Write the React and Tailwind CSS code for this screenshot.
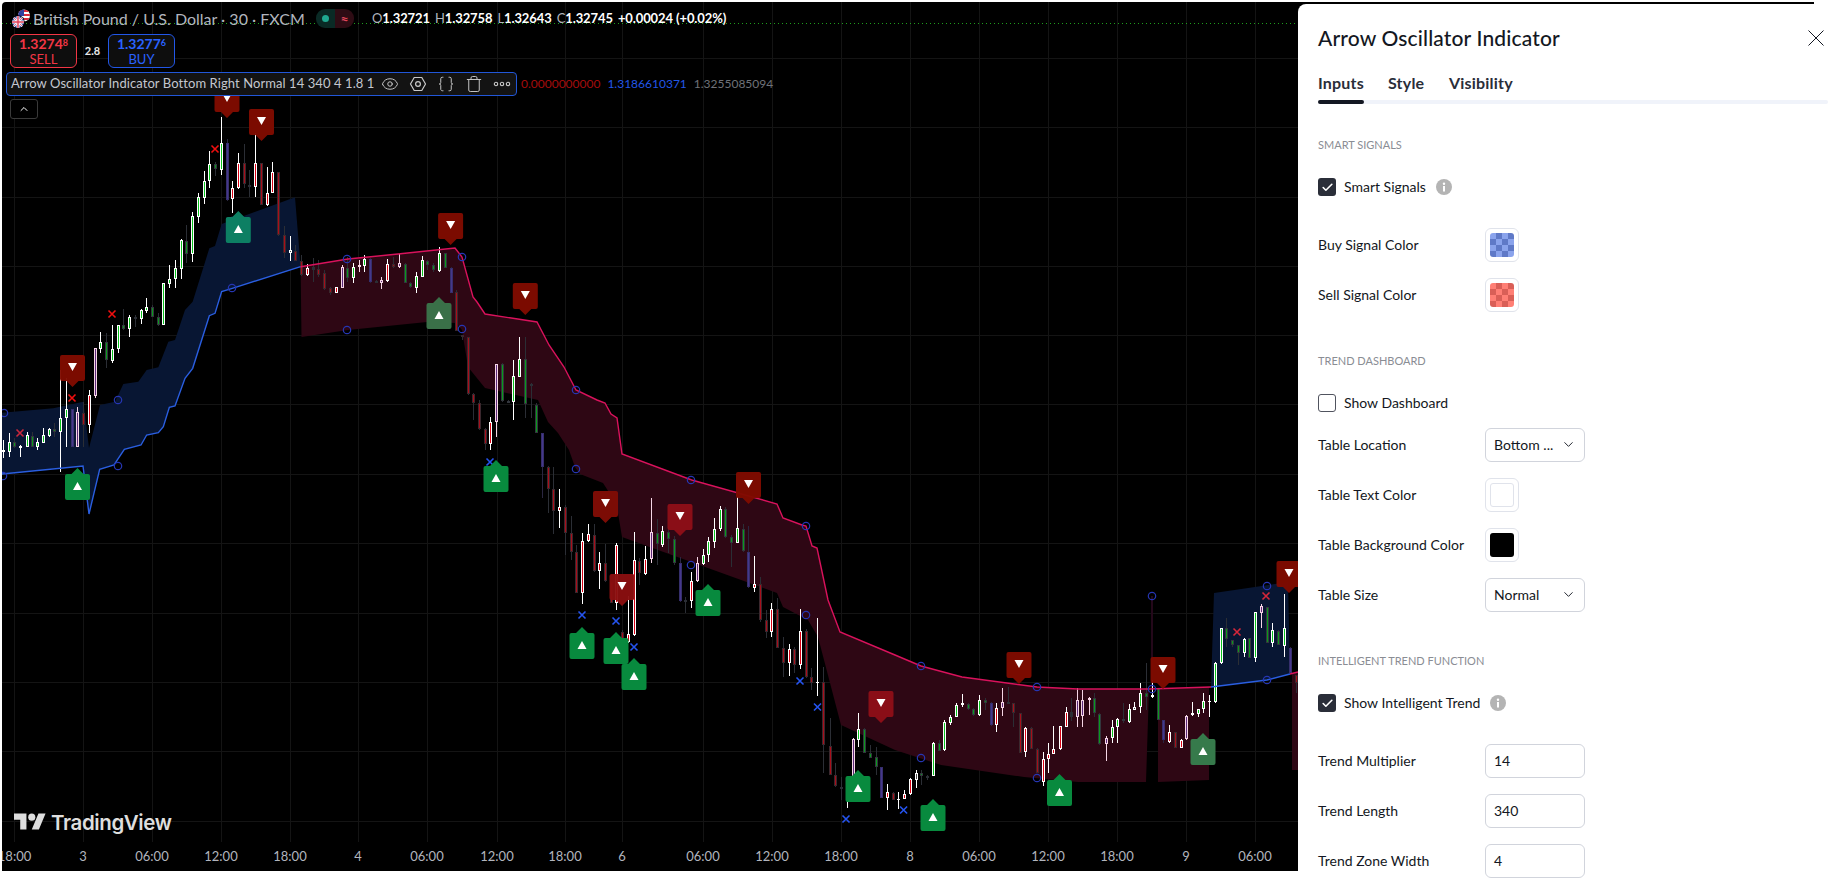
import React from "react";
import { Eye, Braces, Trash, ChevronDown, ChevronUp, Check } from "lucide-react";

const g11 = ([x, ...r]) => [x / 3, r[0] / 3 + 110, r[1] / 3 + 110, r[2] / 3 + 110, r[3] / 3 + 110, r[4]];
const z4 = ([x, ...r]) => [x / 2.412, r[0] / 3 + 100, r[1] / 3 + 100, r[2] / 3 + 100, r[3] / 3 + 100, r[4]];
const z10 = ([x, ...r]) => [440 + x / 3, r[0] / 3 + 400, r[1] / 3 + 400, r[2] / 3 + 400, r[3] / 3 + 400, r[4]];
const z7 = ([x, ...r]) => [650 + x / 2.405, r[0] / 3 + 480, r[1] / 3 + 480, r[2] / 3 + 480, r[3] / 3 + 480, r[4]];

const C11 = [
  [10,990,1045,1020,1025,"w"],[27,970,1040,995,1025,"g"],[43,985,1015,997,1010,"G"],[61,1005,1040,1008,1012,"w"],[80,965,1010,975,1010,"g"],[97,965,1010,977,1010,"G"],[112,985,1020,997,1010,"g"],[129,955,1000,975,998,"g"],[148,955,980,958,977,"g"],[163,940,980,958,965,"G"],[181,780,1085,925,965,"g"],[199,805,1010,898,925,"g"],[217,898,1010,898,1010,"P"],[232,890,1010,907,1010,"k"],[250,875,1010,908,945,"R"],[268,840,968,856,946,"r"],[286,715,863,715,858,"k"],[301,667,730,697,716,"g"],[319,670,775,697,750,"G"],[337,645,760,718,752,"g"],[355,645,730,645,718,"g"],[370,598,660,645,658,"G"],[388,615,680,622,658,"g"],[406,615,650,622,627,"D"],[424,597,642,600,627,"g"],[439,565,608,592,602,"g"],[457,585,622,592,620,"G"],[475,610,648,620,644,"G"],[490,518,645,518,644,"g"],[508,465,533,508,521,"g"],[526,450,535,475,508,"g"],[544,388,507,390,476,"g"],[559,345,458,392,432,"G"],[577,305,455,319,432,"g"],[595,250,338,262,320,"g"],[613,183,281,212,263,"g"],[628,123,233,163,212,"g"],[646,155,197,163,178,"G"],[664,20,195,100,180,"g"],[682,88,272,100,270,"P"],[697,213,308,235,268,"r"],[715,130,236,160,235,"r"],[733,102,233,160,223,"R"],[748,180,260,224,230,"D"],[766,70,260,160,230,"r"],[784,160,285,160,285,"R"],[802,172,288,248,286,"r"],[817,155,250,187,248,"r"],[835,185,378,187,375,"R"],[853,348,445,376,428,"R"],[871,378,452,421,428,"w"],[886,405,450,422,452,"R"],[904,435,498,452,495,"R"],[922,462,497,475,494,"r"],[940,445,515,470,480,"D"],
].map(g11);
const C4 = [
  [768,480,530,508,525,"R"],[782,510,570,518,568,"R"],[797,560,585,565,580,"R"],[810,560,580,562,578,"r"],[824,495,565,500,563,"k"],[838,470,545,503,533,"G"],[852,490,550,500,533,"g"],[865,480,515,495,502,"k"],[879,465,515,477,497,"g"],[893,475,548,478,545,"P"],[907,540,550,543,547,"D"],[920,530,568,540,548,"k"],[934,478,545,492,542,"r"],[948,470,505,492,502,"R"],[963,462,505,490,502,"k"],[976,490,550,492,548,"G"],[990,545,565,548,562,"G"],[1004,515,580,528,563,"g"],[1019,468,530,481,530,"g"],[1031,480,510,482,496,"G"],[1045,490,515,495,510,"G"],[1060,440,515,458,512,"g"],[1073,458,505,458,503,"G"],[1087,500,580,503,578,"P"],[1101,570,690,575,693,"R"],[1115,705,720,705,712,"R"],[1128,710,885,712,882,"R"],[1142,880,960,882,908,"R"],[1156,900,990,908,988,"R"],[1170,985,1050,988,1033,"R"],[1183,952,1050,965,1033,"r"],[1197,792,1012,792,965,"k"],[1212,790,905,793,903,"G"],[1226,900,908,903,906,"G"],[1238,780,960,828,907,"g"],[1253,710,830,777,830,"g"],[1267,710,955,778,912,"G"],[1281,850,955,855,853,"D"],[1294,910,1000,915,998,"G"],
].map(z4);
const C10 = [
  [307,98,293,98,200,"P"],[325,198,338,200,268,"R"],[340,200,402,268,332,"R"],[358,267,383,322,332,"r"],[376,315,465,322,398,"R"],[394,348,480,398,455,"R"],[409,435,580,455,578,"R"],[427,400,612,422,578,"r"],[445,372,425,403,422,"r"],[463,372,515,404,512,"R"],[478,457,567,490,512,"r"],[496,432,545,490,543,"R"],[514,545,610,545,610,"R"],[529,430,630,436,610,"r"],[547,690,730,695,725,"R"],[565,588,728,703,725,"r"],[583,397,708,480,705,"r"],[598,475,555,482,520,"R"],[616,438,525,478,522,"r"],[634,294,490,397,478,"k"],[652,358,495,398,432,"G"],[667,378,440,394,434,"g"],[685,378,460,395,417,"G"],[703,408,495,418,490,"G"],[721,472,605,490,603,"P"],[736,590,640,600,603,"D"],[754,515,623,542,602,"r"],[772,470,545,490,542,"k"],[790,448,495,465,491,"g"],[805,412,485,424,466,"g"],[823,355,445,388,425,"g"],[841,318,392,328,388,"g"],[856,322,415,328,412,"G"],[874,405,500,412,428,"G"],[892,292,430,385,428,"g"],[910,372,455,386,453,"G"],[925,378,565,455,562,"P"],[943,468,575,552,563,"r"],[961,530,665,552,660,"R"],[979,630,715,660,697,"R"],[994,610,710,628,697,"r"],[1012,595,745,628,743,"R"],[1030,710,830,745,788,"R"],[1048,733,828,748,788,"r"],[1063,740,820,748,795,"R"],[1081,628,808,694,796,"r"],[1099,688,835,694,832,"R"],[1114,805,870,832,848,"R"],[1132,655,888,845,847,"D2"],
].map(z10);
const C7 = [
  [416,560,880,605,795,"R"],[433,715,885,797,885,"R"],[445,850,920,885,918,"R"],[459,890,960,920,925,"D"],[473,895,985,900,925,"g"],[488,775,900,778,900,"k"],[500,700,800,748,780,"g"],[515,745,820,748,820,"G"],[530,795,832,820,835,"G"],[544,800,885,832,862,"G"],[556,860,955,862,955,"P"],[570,912,990,937,955,"r"],[585,935,960,938,960,"R"],[597,935,988,958,960,"D2"],[611,930,958,942,958,"r"],[626,895,945,898,942,"r"],[640,870,925,878,900,"w"],[652,870,915,878,888,"G"],[667,885,900,888,890,"D"],[681,785,888,788,888,"g"],[695,780,812,788,812,"G"],[707,720,812,727,811,"g"],[722,705,735,712,728,"g"],[737,668,712,675,712,"g"],[751,642,680,670,676,"g"],[764,668,690,671,688,"G"],[778,685,708,688,706,"G"],[792,645,708,660,706,"g"],[806,655,690,660,668,"G"],[819,665,737,668,735,"P"],[833,670,755,685,735,"r"],[847,625,708,667,685,"k"],[860,620,670,667,668,"D"],[874,670,742,670,700,"R"],[889,700,815,700,818,"R"],[903,742,832,745,815,"r"],[916,742,808,745,808,"R"],[930,805,880,807,880,"R"],[944,815,918,838,905,"r"],[958,790,880,822,838,"r"],[970,738,820,808,822,"r"],[985,738,810,738,808,"r"],[1000,682,738,697,740,"r"],[1013,655,722,697,710,"D"],[1026,625,740,660,710,"k"],[1040,630,740,660,708,"k"],[1055,650,705,655,660,"k"],[1067,640,710,655,700,"G"],[1081,700,795,703,792,"G"],[1096,768,842,775,793,"k"],[1110,720,790,742,773,"g"],[1123,715,790,717,742,"g"],[1137,670,728,718,722,"G"],[1151,672,730,688,725,"g"],[1165,665,690,682,690,"w"],[1178,610,700,640,682,"g"],[1193,550,690,640,650,"G"],[1207,600,655,645,652,"g"],[1222,625,720,625,720,"G"],[1234,720,790,720,780,"P"],[1248,735,790,757,785,"r"],[1263,757,805,757,805,"R"],[1277,778,805,780,805,"r"],[1289,705,780,707,778,"k"],[1303,665,708,700,706,"w"],[1318,690,712,688,702,"g"],[1330,640,700,663,688,"g"],[1345,645,710,663,664,"D2"],[1359,545,670,550,665,"g"],[1373,445,552,445,550,"g"],[1385,415,500,445,478,"G"],[1400,480,500,480,495,"G"],[1414,500,555,495,520,"G"],[1428,475,530,476,520,"g"],[1441,475,535,475,533,"G"],[1455,395,545,397,535,"g"],[1470,372,445,378,398,"k"],[1484,380,490,380,490,"G"],[1497,430,500,450,490,"g"],[1511,450,495,452,495,"G"],[1525,342,530,445,497,"g"],[1538,500,580,503,580,"P"],[1553,585,640,585,610,"R"],
].map(z7);
const CANDLES = [...C11, ...C4, ...C10, ...C7];

const STYLE = {
  g: { wick: "#ffffff", edge: "#ffffff", core: "#08c21c" },
  r: { wick: "#ffffff", edge: "#ffffff", core: "#d90012" },
  w: { wick: "#ffffff", edge: "#ffffff", core: "#4a4a4a" },
  k: { wick: "#f6d6e6", edge: "#f6d6e6", core: "#5a2a78" },
  G: { wick: "#2b2e35", edge: "#33363d", core: "#0a9a1c" },
  R: { wick: "#2b2e35", edge: "#3a282e", core: "#a80e1a" },
  P: { wick: "#2a2640", edge: "#362f6c", core: "#46378c" },
  D: { wick: "#2b2e35", edge: "#2b2e35", core: "#2b2e35" },
  D2: { wick: "#ffffff", edge: "#ffffff", core: "#ffffff" },
};

function Candles() {
  return (
    <g shapeRendering="crispEdges">
      {CANDLES.map(([x, wt, wb, bt, bb, t], i) => {
        const s = STYLE[t];
        const cx = Math.round(x);
        const top = Math.min(bt, bb);
        const h = Math.max(2, Math.abs(bb - bt));
        if (t === "D2")
          return (
            <g key={i}>
              <rect x={cx} y={wt} width={1} height={wb - wt} fill="#fff" />
              <rect x={cx - 1} y={top} width={3} height={1} fill="#fff" />
            </g>
          );
        return (
          <g key={i}>
            <rect x={cx} y={wt} width={1} height={wb - wt} fill={s.wick} />
            <rect x={cx - 1} y={top} width={3} height={h} fill={s.edge} />
            <rect x={cx} y={top + 1} width={1} height={Math.max(0, h - 2)} fill={s.core} />
          </g>
        );
      })}
    </g>
  );
}

const pts = (a) => a.map((p) => p.join(",")).join(" ");
const e11 = (a) => a.map(([x, y]) => [x / 3, y / 3 + 110]);

const blueTop = e11([[6,908],[160,895],[250,875],[267,1014],[300,885],[345,875],[370,822],[415,815],[440,780],[475,772],[505,695],[525,690],[555,600],[578,575],[628,415],[645,408],[665,342],[885,262],[902,471]]);
const blueBot = e11([[697,535],[665,545],[645,610],[628,617],[578,775],[555,805],[525,888],[508,892],[490,950],[475,968],[440,975],[423,1005],[373,1018],[342,1065],[299,1078],[267,1212],[249,1068],[6,1092]]);

const redTop = [[300.6,266.7],[348,259],[398,254],[455,248],[462,257],[473,297],[477,302],[485,314],[537,322],[549,345],[564,367],[576,390],[597,400],[605,403],[611,414],[617,418],[622,454],[691.7,480],[777,504],[783,518],[802,525],[806,526],[812,546],[817,548],[828,600],[840,632],[895,655],[921,666],[962,677],[1037,687],[1078,689],[1149,689]];
const redBot = [[1146,782],[1078,782],[1024,777],[941,765],[895,750],[841,725],[818,637],[808,620],[783,607],[777,593],[622,537],[618,513],[612,497],[603,483],[580,474],[575,467],[569,450],[558,433],[548,422],[538,400],[485,388],[468,367],[462,330],[456,323],[427,322],[348,330],[301.5,337]];
const red2 = [[1158,689],[1209,687],[1209,780],[1158,782]];
const blue3 = [[1211,687],[1214,593],[1288,582],[1290,674],[1267,680]];
const red3 = [[1292,674],[1298,672],[1298,770],[1292,770]];

const SELL = [[227,86,"#800b00"],[261.5,109,"#800b00"],[72.5,355,"#800b00"],[450.6,213,"#800b00"],[525.3,283,"#800b00"],[605.5,491,"#810d05"],[622,574,"#8a0f10"],[680,504,"#8f0f18"],[748.5,472,"#800b00"],[881,691,"#8f0f18"],[1019,652,"#800b00"],[1163,657,"#800b00"],[1289,561,"#800b00"]];
const BUY = [[238.3,217,"#0d7f63"],[77.5,474,"#088a3e"],[496,466,"#088a3e"],[708,590,"#088a3e"],[582,633,"#088a3e"],[616,638,"#088a3e"],[634,664,"#088a3e"],[439,303,"#3a7048"],[858,776,"#088a3e"],[933,805,"#088a3e"],[1059.5,780,"#088a3e"],[1203,739,"#367a4b"]];
const XR = [[215,149,"#f00f0f"],[112,314,"#f00f0f"],[72,398,"#f00f0f"],[20,433,"#c8283c"],[1237,632,"#d6273a"],[1266,596,"#d6273a"]];
const XB = [[490,462],[582,615],[616,621],[634,647],[800,681],[817.5,707],[846,819],[903.6,810]];
const CIRC = [[4,413],[118,400],[232,221],[232,288],[347,259],[347,330],[462,257],[462,329],[576,390],[576,469],[3,476],[118,466],[691,480],[691,565],[806,526],[806,615],[921,666],[921,758],[1037,687],[1037,778],[1152,596],[1152,689],[1267,586],[1267,680]];

const HG = [58,127,197,266,335,404,474,543,613,682,751,821];
const VG = [14.5,83,152,221,290,358,427,497,565,622,703,772,841,910,979,1048,1117,1186,1255];
const TIMES = [[14.5,"18:00"],[83,"3"],[152,"06:00"],[221,"12:00"],[290,"18:00"],[358,"4"],[427,"06:00"],[497,"12:00"],[565,"18:00"],[622,"6"],[703,"06:00"],[772,"12:00"],[841,"18:00"],[910,"8"],[979,"06:00"],[1048,"12:00"],[1117,"18:00"],[1186,"9"],[1255,"06:00"]];

function Sell({ x, y, c }) {
  return (
    <g>
      <path d={`M${x - 12.5} ${y + 2}a2 2 0 0 1 2-2h21a2 2 0 0 1 2 2v22a2 2 0 0 1-2 2h-4.5l-6 6-6-6h-4.5a2 2 0 0 1-2-2z`} fill={c} fillOpacity="0.96" />
      <path d={`M${x - 4.5} ${y + 8}h9l-4.5 8z`} fill="#fff" />
    </g>
  );
}
function Buy({ x, y, c }) {
  return (
    <g>
      <path d={`M${x - 12.5} ${y + 2}a2 2 0 0 1 2-2h4.5l6-6 6 6h4.5a2 2 0 0 1 2 2v22a2 2 0 0 1-2 2h-21a2 2 0 0 1-2-2z`} fill={c} />
      <path d={`M${x - 4.5} ${y + 16}h9l-4.5-8z`} fill="#fff" />
    </g>
  );
}
const Cross = ({ x, y, c }) => (
  <path d={`M${x - 3.5} ${y - 3.5}l7 7m0-7l-7 7`} stroke={c} strokeWidth="1.6" fill="none" />
);

function Chart() {
  return (
    <svg width="1296" height="869" viewBox="2 2 1296 869" className="block">
      <g shapeRendering="crispEdges" stroke="#141414" strokeWidth="1">
        {HG.map((y) => <line key={y} x1="2" x2="1298" y1={y + 0.5} y2={y + 0.5} />)}
        {VG.map((x) => <line key={x} x1={Math.floor(x) + 0.5} x2={Math.floor(x) + 0.5} y1="2" y2="842" />)}
      </g>
      <line x1="2" x2="1298" y1="23.5" y2="23.5" stroke="#1e9e1e" strokeWidth="1" strokeDasharray="1 3" />
      <polygon points={pts([...blueTop, ...blueBot])} fill="#081633" />
      <polygon points={pts([...redTop, ...redBot])} fill="#2e0714" />
      <polygon points={pts(red2)} fill="#2e0714" />
      <polygon points={pts(blue3)} fill="#081633" />
      <polygon points={pts(red3)} fill="#2e0714" />
      <line x1="1152" x2="1152" y1="596" y2="689" stroke="#24081a" strokeWidth="2" />
      <Candles />
      <polyline points={pts(blueBot.slice().reverse().concat([[300.6,266.7]]))} fill="none" stroke="#2a5ee0" strokeWidth="1.4" />
      <polyline points={pts(redTop)} fill="none" stroke="#d9125c" strokeWidth="1.4" />
      <polyline points={pts([[1149,689],[1211,687]])} fill="none" stroke="#d9125c" strokeWidth="1.4" />
      <polyline points={pts([[1211,687],[1267,680],[1290,674]])} fill="none" stroke="#2a5ee0" strokeWidth="1.4" />
      <polyline points={pts([[1290,674],[1298,672]])} fill="none" stroke="#d9125c" strokeWidth="1.4" />
      {CIRC.map(([x, y], i) => <circle key={i} cx={x} cy={y} r="3.7" fill="none" stroke="#2636b4" strokeWidth="1.2" />)}
      {XR.map(([x, y, c], i) => <Cross key={i} x={x} y={y} c={c} />)}
      {XB.map(([x, y], i) => <Cross key={i} x={x} y={y} c="#2554f0" />)}
      {BUY.map(([x, y, c], i) => <Buy key={i} x={x} y={y} c={c} />)}
      {SELL.map(([x, y, c], i) => <Sell key={i} x={x} y={y} c={c} />)}
      <g fill="#b2b5be" fontSize="13" textAnchor="middle">
        {TIMES.map(([x, t], i) => <text key={i} x={x} y="861">{t}</text>)}
      </g>
    </svg>
  );
}

function Flag() {
  return (
    <svg width="20" height="20" viewBox="0 0 20 20" className="shrink-0">
      <defs>
        <clipPath id="fa"><circle cx="13" cy="6.5" r="6" /></clipPath>
        <clipPath id="fb"><circle cx="7" cy="13" r="6" /></clipPath>
      </defs>
      <g clipPath="url(#fa)">
        <rect x="6" width="14" height="14" fill="#fff" />
        <rect x="6" y="1" width="14" height="2" fill="#d8293b" />
        <rect x="6" y="5" width="14" height="2" fill="#d8293b" />
        <rect x="6" y="9" width="14" height="2" fill="#d8293b" />
        <rect x="6" y="0" width="7" height="7" fill="#2e3f9e" />
      </g>
      <circle cx="7" cy="13" r="6.8" fill="#000" />
      <g clipPath="url(#fb)">
        <rect y="6" width="14" height="14" fill="#3a4ea8" />
        <path d="M1 7l12 12M13 7L1 19" stroke="#fff" strokeWidth="2" />
        <path d="M1 7l12 12M13 7L1 19" stroke="#e0405a" strokeWidth="0.8" />
        <path d="M7 6v14M0 13h14" stroke="#fff" strokeWidth="3" />
        <path d="M7 6v14M0 13h14" stroke="#e0405a" strokeWidth="1.5" />
      </g>
    </svg>
  );
}

function Price({ main, sup, label, border, color }) {
  return (
    <div className="w-[67px] h-[34px] rounded-[6px] border bg-[#0e0e0e] flex flex-col items-center justify-center leading-none" style={{ borderColor: border, color }}>
      <div className="text-[14px] font-bold leading-[16px] whitespace-nowrap">{main}<span className="text-[9px] align-[3px]">{sup}</span></div>
      <div className="text-[13px] leading-[15px]">{label}</div>
    </div>
  );
}

function Legend() {
  return (
    <div className="absolute top-0 left-0 w-[1296px] pl-[4px] text-[#b2b5be]">
      <div className="flex items-center h-[19px] mt-[7px] pl-[5px]">
        <Flag />
        <span className="ml-[2px] w-[268px] text-[16px] leading-[19px] whitespace-nowrap text-[#b2b5be]">British Pound / U.S. Dollar · 30 · FXCM</span>
        <div className="ml-[15px] flex h-[19px] rounded-[9px] overflow-hidden">
          <div className="w-[19px] bg-[#0a2a25] flex items-center justify-center"><span className="w-[7px] h-[7px] rounded-full bg-[#1fa890]" /></div>
          <div className="w-[19px] bg-[#2e0c14] flex items-center justify-center text-[#e0455a] text-[14px] font-bold leading-none">≈</div>
        </div>
        <div className="ml-[18px] text-[13px] whitespace-nowrap font-bold text-white flex gap-[5px] tracking-[-0.1px]">
          <span><span className="font-normal text-[#b2b5be]">O</span>1.32721</span>
          <span><span className="font-normal text-[#b2b5be]">H</span>1.32758</span>
          <span><span className="font-normal text-[#b2b5be]">L</span>1.32643</span>
          <span><span className="font-normal text-[#b2b5be]">C</span>1.32745</span>
          <span>+0.00024 (+0.02%)</span>
        </div>
      </div>
      <div className="flex items-center mt-[6px] pl-[4px]">
        <Price main="1.3274" sup="8" label="SELL" border="#f23645" color="#f23645" />
        <span className="w-[31px] text-center text-[11px] font-bold text-[#e6e6e6]">2.8</span>
        <Price main="1.3277" sup="6" label="BUY" border="#2257e8" color="#2962ff" />
      </div>
      <div className="flex items-center mt-[4px]">
        <div className="w-[511px] h-[24px] rounded-[4px] border border-[#2257d8] bg-[#131313] flex items-center pl-[4px] text-[13px] tracking-[0.08px] text-[#c4c7cf] whitespace-nowrap">
          <span className="w-[366px]">Arrow Oscillator Indicator Bottom Right Normal 14 340 4 1.8 1</span>
          <div className="flex items-center text-[#c8c8c8]">
            <span className="w-[28px] flex justify-center"><Eye size={18} strokeWidth={1.3} /></span>
            <span className="w-[28px] flex justify-center">
              <svg width="18" height="18" viewBox="0 0 18 18" fill="none" stroke="currentColor" strokeWidth="1.2"><path d="M5.2 2.5h7.6L16.5 9l-3.7 6.5H5.2L1.5 9z" /><circle cx="9" cy="9" r="2.4" /></svg>
            </span>
            <span className="w-[28px] flex justify-center"><Braces size={18} strokeWidth={1.3} /></span>
            <span className="w-[28px] flex justify-center"><Trash size={18} strokeWidth={1.3} /></span>
            <span className="w-[28px] flex justify-center">
              <svg width="18" height="8" viewBox="0 0 18 8" fill="none" stroke="currentColor" strokeWidth="1.1"><circle cx="3" cy="4" r="1.7" /><circle cx="9" cy="4" r="1.7" /><circle cx="15" cy="4" r="1.7" /></svg>
            </span>
          </div>
        </div>
        <div className="ml-[4px] flex gap-[7px] text-[12px] whitespace-nowrap">
          <span className="text-[#a50c0c]">0.0000000000</span>
          <span className="text-[#2257e8]">1.3186610371</span>
          <span className="text-[#6f7278]">1.3255085094</span>
        </div>
      </div>
      <div className="ml-[4px] mt-[3px] w-[28px] h-[20px] rounded-[3px] border border-[#3a3a3a] bg-black flex items-center justify-center text-white">
        <ChevronUp size={12} strokeWidth={2} />
      </div>
    </div>
  );
}

function Logo() {
  return (
    <div className="absolute left-[12px] top-[808px] flex items-center gap-[5px] text-[#dedede]">
      <svg width="32" height="25" viewBox="0 0 36 28" fill="currentColor">
        <path d="M14 22H7V11H0V4h14v18zM28 22h-8l7.5-18h8L28 22z" />
        <circle cx="20" cy="8" r="4" />
      </svg>
      <span className="[font-family:Inter,sans-serif] text-[20.5px] font-semibold tracking-[-0.4px] leading-[25px]">TradingView</span>
    </div>
  );
}

const Section = ({ children, className }) => (
  <div className={`h-[16px] leading-[16px] text-[11px] text-[#8a8d94] ${className}`}>{children}</div>
);

function Info() {
  return (
    <svg width="16" height="16" viewBox="0 0 16 16" className="ml-[10px]">
      <circle cx="8" cy="8" r="8" fill="#b4b4b4" />
      <rect x="7" y="7" width="2" height="5.5" fill="#fff" />
      <circle cx="8" cy="4.8" r="1.2" fill="#fff" />
    </svg>
  );
}

function CheckRow({ checked, label, info, className }) {
  return (
    <div className={`flex items-center h-[20px] ${className}`}>
      {checked ? (
        <span className="w-[18px] h-[18px] rounded-[3px] bg-[#2a2e39] flex items-center justify-center text-white"><Check size={13} strokeWidth={3} /></span>
      ) : (
        <span className="w-[18px] h-[18px] rounded-[3px] border border-[#50535e] bg-white" />
      )}
      <span className="ml-[8px] pb-[2px] text-[14px] text-[#131722]">{label}</span>
      {info && <Info />}
    </div>
  );
}

function Row({ label, className = "", children }) {
  return (
    <div className={`flex items-center h-[34px] ${className}`}>
      <span className="w-[167px] pb-[2px] text-[14px] text-[#131722] whitespace-nowrap">{label}</span>
      {children}
    </div>
  );
}

function Swatch({ className }) {
  return (
    <div className="w-[34px] h-[34px] rounded-[6px] border border-[#e0e3eb] flex items-center justify-center bg-white">
      <div className={`w-[24px] h-[24px] rounded-[3px] ${className}`} />
    </div>
  );
}

const Box = ({ children }) => (
  <div className="w-[100px] h-[34px] rounded-[6px] border border-[#d1d4dc] flex items-center justify-between pl-[8px] pr-[8px] pb-[1px] text-[14px] text-[#131722]">{children}</div>
);

function Panel() {
  return (
    <div className="flex-1 min-w-0 flex flex-col">
      <div className="h-[2px] w-[516px] bg-black" />
      <div className="bg-black flex-1 min-h-0">
        <div className="h-full bg-white rounded-tl-[8px] pt-[20px] pl-[20px] pr-[6px] overflow-hidden">
          <div className="flex items-center justify-between h-[28px] pr-[4px]">
            <span className="text-[21px] tracking-[0.15px] font-medium text-[#131722] leading-[28px]">Arrow Oscillator Indicator</span>
            <svg width="16" height="16" viewBox="0 0 16 16" fill="none" stroke="#131722" strokeWidth="1"><path d="M.5.5l15 15m0-15l-15 15" /></svg>
          </div>
          <div className="flex gap-[25px] h-[33px] mt-[15px] items-start text-[16px] tracking-[0.2px] font-bold text-[#2a2e39] leading-[32px]">
            <span className="w-[45px]">Inputs</span><span className="w-[36px]">Style</span><span>Visibility</span>
          </div>
          <div className="h-[4px] rounded-full bg-[#f0f3fa]">
            <div className="w-[46px] h-[4px] rounded-full bg-[#131722]" />
          </div>
          <Section className="mt-[33px]">SMART SIGNALS</Section>
          <CheckRow checked label="Smart Signals" info className="mt-[24px]" />
          <Row label="Buy Signal Color" className="mt-[31px]"><Swatch className="bg-[conic-gradient(#5f79c7_25%,#8aa3ec_0_50%,#5f79c7_0_75%,#8aa3ec_0)] bg-[length:12px_12px]" /></Row>
          <Row label="Sell Signal Color" className="mt-[16px]"><Swatch className="bg-[conic-gradient(#d95f57_25%,#ff7f75_0_50%,#d95f57_0_75%,#ff7f75_0)] bg-[length:12px_12px]" /></Row>
          <Section className="mt-[41px]">TREND DASHBOARD</Section>
          <CheckRow label="Show Dashboard" className="mt-[24px]" />
          <Row label="Table Location" className="mt-[15px]"><Box><span>Bottom ...</span><ChevronDown size={15} strokeWidth={1.5} /></Box></Row>
          <Row label="Table Text Color" className="mt-[16px]"><Swatch className="bg-white border border-[#e0e3eb]" /></Row>
          <Row label="Table Background Color" className="mt-[16px]"><Swatch className="bg-black" /></Row>
          <Row label="Table Size" className="mt-[16px]"><Box><span>Normal</span><ChevronDown size={15} strokeWidth={1.5} /></Box></Row>
          <Section className="mt-[41px]">INTELLIGENT TREND FUNCTION</Section>
          <CheckRow checked label="Show Intelligent Trend" info className="mt-[24px]" />
          <Row label="Trend Multiplier" className="mt-[31px]"><Box><span>14</span></Box></Row>
          <Row label="Trend Length" className="mt-[16px]"><Box><span>340</span></Box></Row>
          <Row label="Trend Zone Width" className="mt-[16px]"><Box><span>4</span></Box></Row>
        </div>
      </div>
    </div>
  );
}

export default function App() {
  return (
    <div className="w-[1834px] h-[878px] bg-white flex pl-[2px] pt-[2px] overflow-hidden [font-family:Lato,sans-serif]">
      <div className="relative w-[1296px] h-[869px] bg-black overflow-hidden rounded-tl-[4px] shrink-0">
        <Chart />
        <Legend />
        <Logo />
      </div>
      <Panel />
    </div>
  );
}
